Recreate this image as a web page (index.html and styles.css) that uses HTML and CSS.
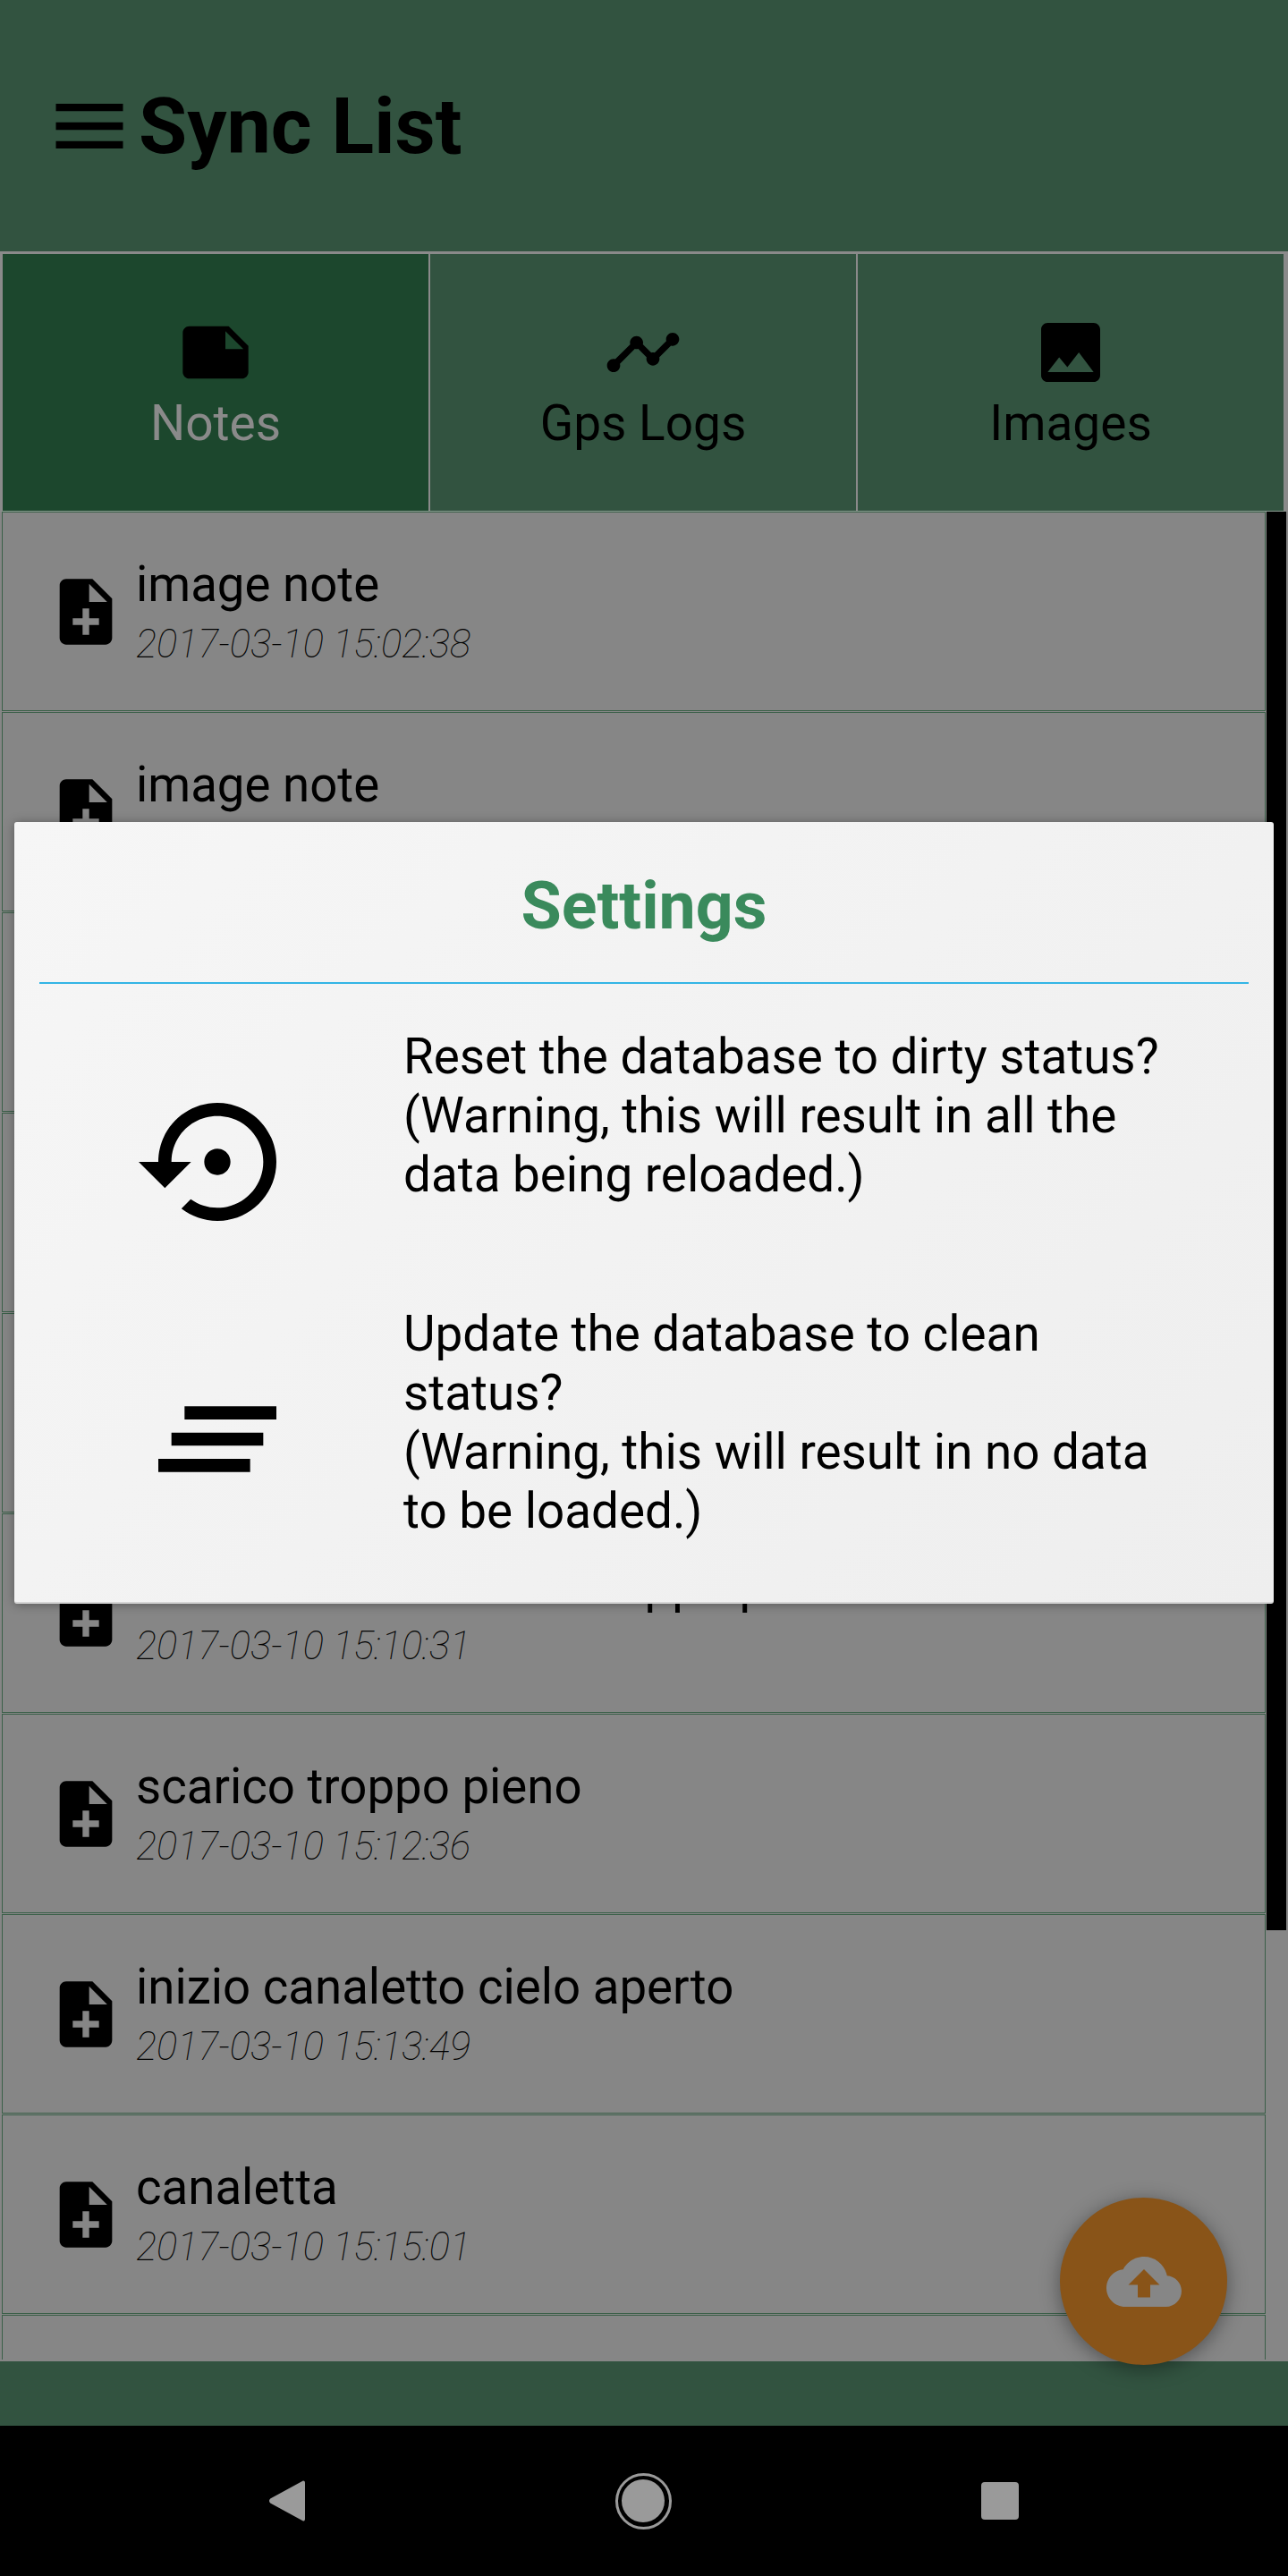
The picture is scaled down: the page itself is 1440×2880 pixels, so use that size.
FILE: index.html

```html
<!DOCTYPE html>
<html lang="en">
<head>
  <meta charset="UTF-8" />
  <meta name="viewport" content="width=device-width, initial-scale=1" />
  <title>Sync List</title>
  <link rel="stylesheet" href="styles.css">
</head>
<body>
  <div class="phone">
    <header class="topbar">
      <svg class="menu-icon" viewBox="0 0 24 24"><path d="M3 18h18v-2H3v2zm0-5h18v-2H3v2zm0-7v2h18V6H3z"/></svg>
      <h1>Sync List</h1>
    </header>

    <nav class="tabs">
      <div class="tab active">
        <svg class="tab-icon" viewBox="0 0 24 24"><path d="M22 10l-6-6H4c-1.1 0-2 .9-2 2v12.01c0 1.1.9 1.99 2 1.99l16-.01c1.1 0 2-.89 2-1.99v-8zm-7-4.5l5.5 5.5H15V5.5z"/></svg>
        <span>Notes</span>
      </div>
      <div class="tab">
        <svg class="tab-icon" viewBox="0 0 24 24"><path d="M23 8c0 1.1-.9 2-2 2-.18 0-.35-.02-.51-.07l-3.56 3.55c.05.16.07.34.07.52 0 1.1-.9 2-2 2s-2-.9-2-2c0-.18.02-.36.07-.52l-2.55-2.55c-.16.05-.34.07-.52.07s-.36-.02-.52-.07l-4.55 4.56c.05.16.07.33.07.51 0 1.1-.9 2-2 2s-2-.9-2-2 .9-2 2-2c.18 0 .35.02.51.07l4.56-4.55C8.02 9.36 8 9.18 8 9c0-1.1.9-2 2-2s2 .9 2 2c0 .18-.02.36-.07.52l2.55 2.55c.16-.05.34-.07.52-.07s.36.02.52.07l3.55-3.56C19.02 8.35 19 8.18 19 8c0-1.1.9-2 2-2s2 .9 2 2z"/></svg>
        <span>Gps Logs</span>
      </div>
      <div class="tab">
        <svg class="tab-icon" viewBox="0 0 24 24"><path d="M21 19V5c0-1.1-.9-2-2-2H5c-1.1 0-2 .9-2 2v14c0 1.1.9 2 2 2h14c1.1 0 2-.9 2-2zM8.5 13.5l2.5 3.01L14.5 12l4.5 6H5l3.5-4.5z"/></svg>
        <span>Images</span>
      </div>
    </nav>

    <main class="list">
      <div class="row">
        <svg class="row-icon" viewBox="0 0 24 24"><path d="M14 2H6c-1.1 0-1.99.9-1.99 2L4 20c0 1.1.89 2 1.99 2H18c1.1 0 2-.9 2-2V8l-6-6zm2 14h-3v3h-2v-3H8v-2h3v-3h2v3h3v2zm-3-7V3.5L18.5 9H13z"/></svg>
        <div class="row-text"><div class="row-title">image note</div><div class="row-date">2017-03-10 15:02:38</div></div>
      </div>
      <div class="row">
        <svg class="row-icon" viewBox="0 0 24 24"><path d="M14 2H6c-1.1 0-1.99.9-1.99 2L4 20c0 1.1.89 2 1.99 2H18c1.1 0 2-.9 2-2V8l-6-6zm2 14h-3v3h-2v-3H8v-2h3v-3h2v3h3v2zm-3-7V3.5L18.5 9H13z"/></svg>
        <div class="row-text"><div class="row-title">image note</div><div class="row-date">2017-03-10 15:03:20</div></div>
      </div>
      <div class="row"></div>
      <div class="row"></div>
      <div class="row"></div>
      <div class="row">
        <svg class="row-icon" viewBox="0 0 24 24"><path d="M14 2H6c-1.1 0-1.99.9-1.99 2L4 20c0 1.1.89 2 1.99 2H18c1.1 0 2-.9 2-2V8l-6-6zm2 14h-3v3h-2v-3H8v-2h3v-3h2v3h3v2zm-3-7V3.5L18.5 9H13z"/></svg>
        <div class="row-text"><div class="row-title row-title-covered">tubazione di scarico troppo pieno</div><div class="row-date">2017-03-10 15:10:31</div></div>
      </div>
      <div class="row">
        <svg class="row-icon" viewBox="0 0 24 24"><path d="M14 2H6c-1.1 0-1.99.9-1.99 2L4 20c0 1.1.89 2 1.99 2H18c1.1 0 2-.9 2-2V8l-6-6zm2 14h-3v3h-2v-3H8v-2h3v-3h2v3h3v2zm-3-7V3.5L18.5 9H13z"/></svg>
        <div class="row-text"><div class="row-title">scarico troppo pieno</div><div class="row-date">2017-03-10 15:12:36</div></div>
      </div>
      <div class="row">
        <svg class="row-icon" viewBox="0 0 24 24"><path d="M14 2H6c-1.1 0-1.99.9-1.99 2L4 20c0 1.1.89 2 1.99 2H18c1.1 0 2-.9 2-2V8l-6-6zm2 14h-3v3h-2v-3H8v-2h3v-3h2v3h3v2zm-3-7V3.5L18.5 9H13z"/></svg>
        <div class="row-text"><div class="row-title">inizio canaletto cielo aperto</div><div class="row-date">2017-03-10 15:13:49</div></div>
      </div>
      <div class="row">
        <svg class="row-icon" viewBox="0 0 24 24"><path d="M14 2H6c-1.1 0-1.99.9-1.99 2L4 20c0 1.1.89 2 1.99 2H18c1.1 0 2-.9 2-2V8l-6-6zm2 14h-3v3h-2v-3H8v-2h3v-3h2v3h3v2zm-3-7V3.5L18.5 9H13z"/></svg>
        <div class="row-text"><div class="row-title">canaletta</div><div class="row-date">2017-03-10 15:15:01</div></div>
      </div>
      <div class="row row-cut"></div>
      <div class="scrollbar"></div>
    </main>

    <div class="footbar"></div>

    <div class="sysnav">
      <svg class="nav-back" viewBox="0 0 40 46"><path d="M36.5 1.2c1.6-1.4 3.5-.6 3.5 1.6v40.4c0 2.2-1.9 3-3.5 1.6L1.2 25.4c-1.6-1.4-1.6-3.4 0-4.8z"/></svg>
      <div class="nav-home"><div class="nav-home-dot"></div></div>
      <div class="nav-recent"></div>
    </div>

    <button class="fab" type="button">
      <svg class="fab-icon" viewBox="0 0 24 24"><path d="M19.35 10.04C18.67 6.59 15.64 4 12 4 9.11 4 6.6 5.64 5.35 8.04 2.34 8.36 0 10.91 0 14c0 3.31 2.69 6 6 6h13c2.76 0 5-2.24 5-5 0-2.64-2.05-4.78-4.65-4.96zM14 13v4h-4v-4H7l5-5 5 5h-3z"/></svg>
    </button>

    <section class="dialog">
      <h2>Settings</h2>
      <div class="dialog-row first">
        <svg class="dialog-icon" viewBox="0 0 24 24"><path d="M14 12c0-1.1-.9-2-2-2s-2 .9-2 2 .9 2 2 2 2-.9 2-2zm-2-9c-4.97 0-9 4.03-9 9H0l4 4 4-4H5c0-3.87 3.13-7 7-7s7 3.13 7 7-3.13 7-7 7c-1.51 0-2.91-.49-4.06-1.3l-1.42 1.44C8.04 20.3 9.94 21 12 21c4.97 0 9-4.03 9-9s-4.03-9-9-9z"/></svg>
        <p>Reset the database to dirty status?<br>(Warning, this will result in all the data being reloaded.)</p>
      </div>
      <div class="dialog-row">
        <svg class="dialog-icon" viewBox="0 0 24 24"><path d="M5 13h14v-2H5v2zm-2 4h14v-2H3v2zM7 7v2h14V7H7z"/></svg>
        <p>Update the database to clean status?<br>(Warning, this will result in no data to be loaded.)</p>
      </div>
    </section>
  </div>
</body>
</html>
```

FILE: styles.css

```css
body {
  margin: 0;
  background: #868686;
  font-family: Roboto, "Liberation Sans", sans-serif;
  color: #000;
}
svg {
  display: block;
  fill: #000;
}
.phone {
  position: relative;
  width: 1440px;
  height: 2880px;
  overflow: hidden;
  display: flex;
  flex-direction: column;
}

.topbar {
  height: 281px;
  flex: none;
  box-sizing: border-box;
  background: #325340;
  display: flex;
  align-items: center;
  padding-left: 50px;
}
.menu-icon {
  width: 100px;
  height: 100px;
  margin-right: 5px;
}
.topbar h1 {
  margin: 0;
  font-size: 88px;
  font-weight: 700;
  line-height: 100px;
}

.tabs {
  height: 291px;
  flex: none;
  box-sizing: border-box;
  display: flex;
  background: #325340;
  border-top: 3px solid #8a8a8a;
  border-left: 3px solid #8a8a8a;
  border-right: 5px solid #8a8a8a;
  border-bottom: 1px solid #8a9a90;
}
.tab {
  flex: 1;
  display: flex;
  flex-direction: column;
  align-items: center;
  padding-top: 66px;
  font-size: 55px;
  line-height: 64px;
  border-right: 2px solid #8a8a8a;
}
.tab:last-child {
  border-right: 0;
}
.tab.active {
  background: #1c472d;
  color: #8a8a8a;
}
.tab-icon {
  width: 88px;
  height: 88px;
  margin-bottom: 3px;
}

.list {
  position: relative;
  height: 2068px;
  flex: none;
  overflow: hidden;
  padding-left: 2px;
}
.row {
  box-sizing: border-box;
  width: 1413px;
  height: 223px;
  margin-bottom: 1px;
  border: 1px solid #3a5f48;
  display: flex;
  align-items: center;
  padding-left: 49px;
}
.row-cut {
  height: 50px;
  border-bottom: 0;
}
.row-icon {
  width: 88px;
  height: 88px;
  flex: none;
  margin-right: 12px;
}
.row-text {
  padding-top: 1px;
}
.row-title {
  font-size: 54.6px;
  line-height: 66px;
}
.row-title-covered {
  white-space: nowrap;
}
.row-date {
  margin-top: 7px;
  font-size: 43.5px;
  line-height: 56px;
  font-style: italic;
  font-weight: 100;
}
.scrollbar {
  position: absolute;
  top: 0;
  left: 1416px;
  width: 22px;
  height: 1586px;
  background: #000;
}

.footbar {
  height: 72px;
  flex: none;
  background: #325340;
}
.sysnav {
  height: 168px;
  flex: none;
  background: #000;
  display: flex;
  align-items: center;
  justify-content: space-between;
  padding: 0 301px;
}
.nav-back {
  width: 40px;
  height: 46px;
  fill: #9a9a9a;
}
.nav-home {
  box-sizing: border-box;
  width: 63px;
  height: 63px;
  border: 3px solid #9a9a9a;
  border-radius: 50%;
  display: flex;
  align-items: center;
  justify-content: center;
}
.nav-home-dot {
  width: 48px;
  height: 48px;
  border-radius: 50%;
  background: #9a9a9a;
}
.nav-recent {
  width: 42px;
  height: 42px;
  border-radius: 4px;
  background: #9a9a9a;
}

.fab {
  position: absolute;
  left: 1185px;
  top: 2457px;
  width: 187px;
  height: 187px;
  padding: 0;
  border: 0;
  border-radius: 50%;
  background: #895418;
  box-shadow: 0 4px 22px rgba(0,0,0,0.4);
  display: flex;
  align-items: center;
  justify-content: center;
}
.fab-icon {
  width: 84px;
  height: 84px;
  fill: #868686;
}

.dialog {
  position: absolute;
  left: 16px;
  top: 919px;
  width: 1408px;
  height: 874px;
  box-sizing: border-box;
  padding: 0 28px;
  border-radius: 3px;
  background: linear-gradient(135deg, #f6f6f6, #eeeeee);
  box-shadow: 0 1px 12px rgba(0,0,0,0.35);
  border-bottom: 2px solid #d5d5d5;
}
.dialog h2 {
  margin: 0;
  height: 181px;
  box-sizing: border-box;
  padding-top: 52px;
  border-bottom: 2px solid #33b5e5;
  text-align: center;
  color: #3a8a5c;
  font-size: 73.5px;
  font-weight: 700;
  line-height: 84px;
}
.dialog-row {
  display: flex;
  align-items: flex-start;
  margin-top: 71px;
}
.dialog-row.first {
  margin-top: 48px;
}
.dialog-icon {
  width: 176px;
  height: 176px;
  flex: none;
  margin: 63px 120px 0 111px;
}
.dialog-row p {
  margin: 0;
  width: 846px;
  font-size: 54.8px;
  line-height: 66px;
}
```
